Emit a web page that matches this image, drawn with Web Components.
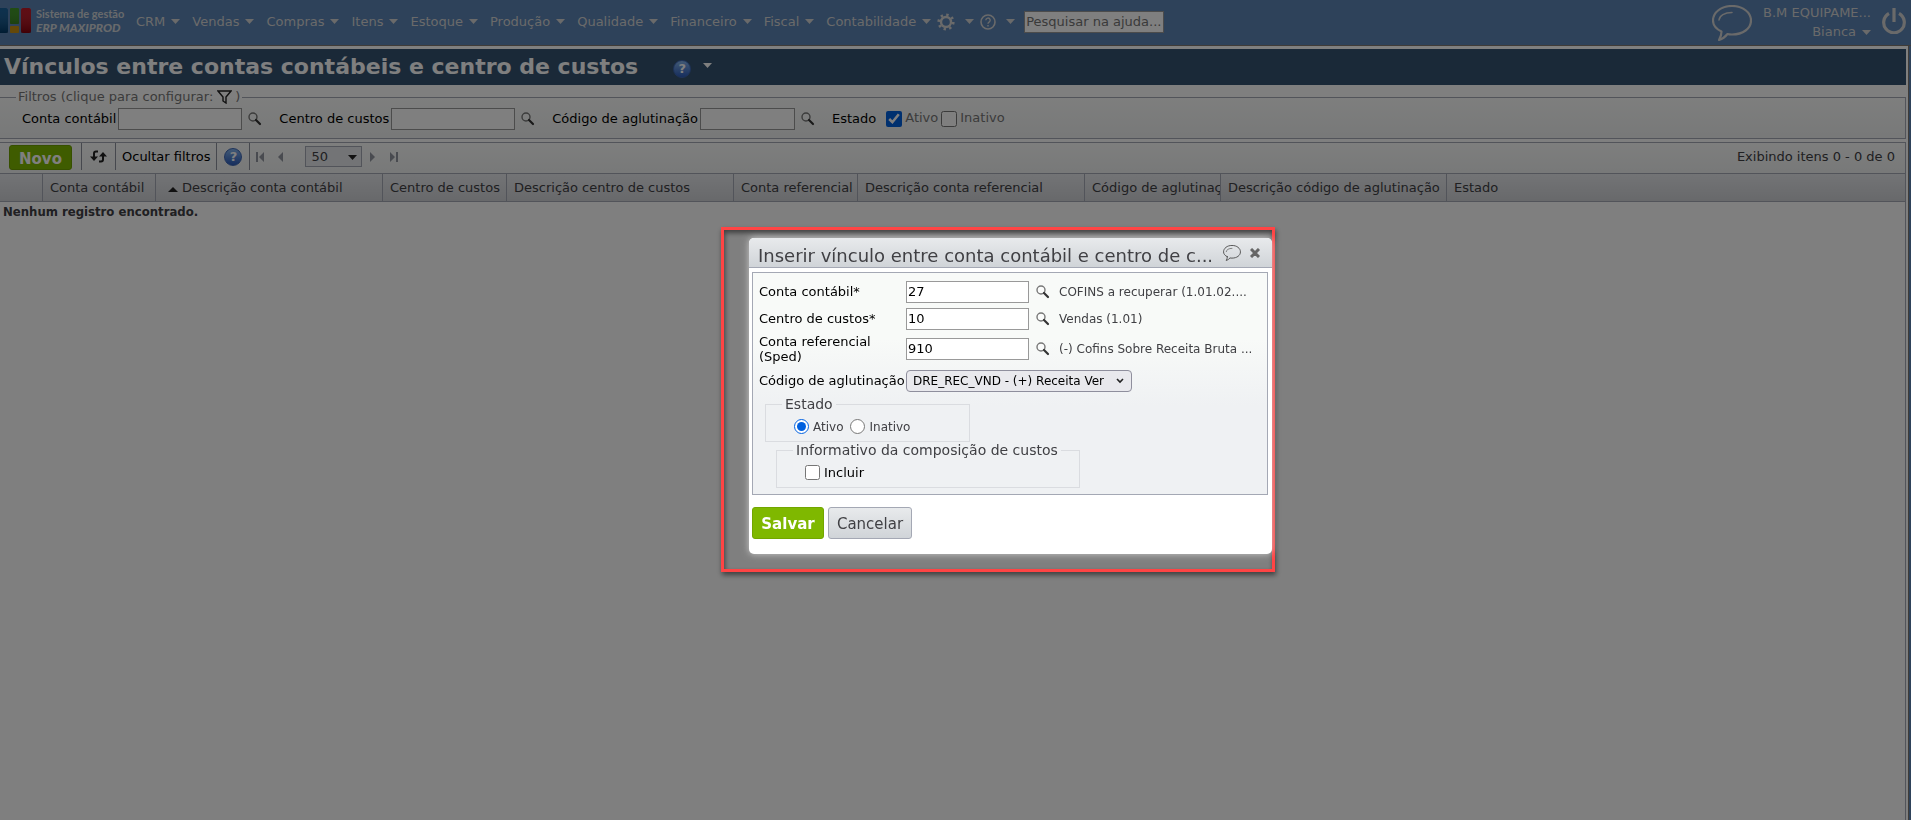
<!DOCTYPE html>
<html lang="pt-BR">
<head>
<meta charset="utf-8">
<title>Vínculos entre contas contábeis e centro de custos</title>
<style>
  html {
    height: 100%;
  }

  body {
    --bar-color: #5c84b4;
    --title-color: #345270;
    --line-color: #a4a8b4;
    --text-color: #404044;
    --green: #7fb800;
    margin: 0;
    min-height: 100%;
    display: flex;
    flex-direction: column;
    background: var(--bar-color);
    font-family: Verdana, "DejaVu Sans", sans-serif;
    font-size: 13px;
    line-height: 16px;
    color: var(--text-color);
  }
</style>
</head>
<body>
  <erp-topbar></erp-topbar>
  <erp-page>
    <page-title slot="title">Vínculos entre contas contábeis e centro de custos</page-title>
    <filter-panel></filter-panel>
    <data-grid></data-grid>
  </erp-page>
  <modal-layer>
    <form-dialog>
      <span slot="title">Inserir vínculo entre conta contábil e centro de c...</span>
      <lookup-row label="Conta contábil*" value="27">COFINS a recuperar (1.01.02....</lookup-row>
      <lookup-row label="Centro de custos*" value="10">Vendas (1.01)</lookup-row>
      <lookup-row label="Conta referencial (Sped)" value="910">(-) Cofins Sobre Receita Bruta ...</lookup-row>
      <binding-options></binding-options>
    </form-dialog>
  </modal-layer>

<script>
  function define(name, html, setup) {
    const template = document.createElement("template");
    template.innerHTML = html;

    window.customElements.define(name, class extends HTMLElement {
      constructor() {
        super();
        const shadowRoot = this.attachShadow({ mode: "open" });
        shadowRoot.appendChild(template.content.cloneNode(true));
        if (setup) setup(this, shadowRoot);
      }
    });
  }

  // icons

  define("icon-search", `
    <style>
      :host { display: block; width: 14px; height: 14px; }
      svg { display: block; }
    </style>
    <svg width="14" height="14" viewBox="0 0 14 14">
      <circle cx="5" cy="5" r="4" fill="#fff" fill-opacity=".4" stroke="#777" stroke-width="1.4"/>
      <path d="M8 8 12 12" stroke="#333" stroke-width="2.2" stroke-linecap="round"/>
    </svg>
  `);

  define("icon-help", `
    <style>
      :host { display: block; width: 18px; height: 18px; }
      div {
        box-sizing: border-box;
        height: 100%;
        border: 1px solid #3d66b4;
        border-radius: 50%;
        background: linear-gradient(#84b4ec, #2c5cbc);
        color: #fff;
        display: flex;
        align-items: center;
        justify-content: center;
        font-size: 13px;
        font-weight: bold;
      }
    </style>
    <div>?</div>
  `);

  define("icon-caret", `
    <style>
      :host { display: block; width: 9px; height: 5px; }
      svg { display: block; }
    </style>
    <svg width="9" height="5" viewBox="0 0 9 5"><path d="M0 0h9L4.500 5z" fill="currentColor"/></svg>
  `);

  define("icon-bubble", `
    <style>
      :host { display: block; width: 40px; height: 36px; }
      svg { display: block; width: 100%; height: 100%; }
    </style>
    <svg viewBox="0 0 40 36" fill="none" stroke="currentColor" stroke-width="2.200" stroke-linecap="round" stroke-linejoin="round">
      <path d="M9.500 26.500C4 24 1 20 1 15.500 1 7.500 9 1 20 1s19 6.500 19 14.500S31 29.500 20 29.500c-1.500 0-3 0-4.500-.5-2 2.500-5 5-8.500 6 1.500-2.500 2.500-5.500 2.500-8.500z"/>
      <path d="M7 15c.5-4.500 5.500-7.500 13-7.500" stroke-width="1.500"/>
    </svg>
  `);

  // top menu bar

  define("menu-item", `
    <style>
      :host { display: block; }
      a {
        display: flex;
        align-items: center;
        gap: 6px;
        color: inherit;
        text-decoration: none;
      }
      :host(.tool) a { gap: 10px; }
    </style>
    <a href="#"><slot></slot><icon-caret></icon-caret></a>
  `);

  define("erp-logo", `
    <style>
      :host {
        display: flex;
        align-items: center;
        gap: 5px;
        width: 136px;
        font-family: Lato, sans-serif;
        font-size: 11px;
        line-height: 14px;
        font-weight: bold;
        color: #d0d4d8;
        white-space: nowrap;
      }
      svg { display: block; }
      em { display: block; font-size: 12px; font-weight: 900; }
    </style>
    <svg width="31" height="25" viewBox="0 0 31 25">
      <defs>
        <linearGradient id="shade" x2="0" y2="1">
          <stop offset="0" stop-color="#fff" stop-opacity=".1"/>
          <stop offset="1" stop-color="#000" stop-opacity=".3"/>
        </linearGradient>
      </defs>
      <path d="M0 0h6q2 0 2 2v21q0 2-2 2H0z" fill="#005090"/>
      <rect x="10" width="9" height="16" rx="1" fill="#2c8c10"/>
      <rect x="10" y="18" width="9" height="7" rx="1" fill="#c89010"/>
      <rect x="21" width="10" height="25" rx="2" fill="#b80010"/>
      <path d="M0 0h8v25H0zM10 0h9v16h-9zM21 0h10v25H21z" fill="url(#shade)"/>
    </svg>
    <div>Sistema de gestão<em>ERP MAXIPROD</em></div>
  `);

  define("erp-topbar", `
    <style>
      :host {
        display: flex;
        align-items: center;
        height: 45px;
        border-bottom: 1px solid #807870;
        color: #d4d4d4;
      }
      erp-logo { margin-bottom: 4px; }
      nav {
        display: flex;
        align-items: center;
        gap: 12px;
        flex: 1;
        margin-bottom: 2px;
      }
      .tool { margin-left: -6px; }
      .tool svg { display: block; }
      input {
        box-sizing: border-box;
        width: 140px;
        height: 22px;
        margin-left: -3px;
        padding: 0 1px;
        border: 1px solid #999;
        background: #fff;
        font: inherit;
      }
      input::placeholder { color: #757575; opacity: 1; }
      .user {
        display: flex;
        align-items: center;
        gap: 11px;
        padding-right: 5px;
      }
      .names {
        display: flex;
        flex-direction: column;
        align-items: flex-end;
        gap: 3px;
      }
      button {
        margin-bottom: 4px;
        border: 0;
        padding: 0;
        background: none;
        color: inherit;
      }
      button svg { display: block; }
    </style>
    <erp-logo></erp-logo>
    <nav>
      <menu-item>CRM</menu-item>
      <menu-item>Vendas</menu-item>
      <menu-item>Compras</menu-item>
      <menu-item>Itens</menu-item>
      <menu-item>Estoque</menu-item>
      <menu-item>Produção</menu-item>
      <menu-item>Qualidade</menu-item>
      <menu-item>Financeiro</menu-item>
      <menu-item>Fiscal</menu-item>
      <menu-item>Contabilidade</menu-item>
      <menu-item class="tool">
        <svg width="18" height="18" viewBox="0 0 18 18" fill="none" stroke="currentColor">
          <circle cx="9" cy="9" r="5" stroke-width="2.400"/>
          <circle cx="9" cy="9" r="7.300" stroke-width="2.600" stroke-dasharray="2.400 3.333"/>
        </svg>
      </menu-item>
      <menu-item class="tool">
        <svg width="16" height="16" viewBox="0 0 16 16" fill="none" stroke="currentColor">
          <circle cx="8" cy="8" r="7" stroke-width="1.600"/>
          <path d="M5.800 6.300a2.200 2.200 0 1 1 3.300 1.900c-.8.500-1.100.8-1.100 1.500M8 11v1.500" stroke-width="1.400"/>
        </svg>
      </menu-item>
      <input type="text" placeholder="Pesquisar na ajuda..." aria-label="Pesquisar na ajuda">
    </nav>
    <div class="user">
      <icon-bubble></icon-bubble>
      <div class="names">
        <span>B.M EQUIPAME...</span>
        <menu-item>Bianca</menu-item>
      </div>
      <button type="button" aria-label="Sair">
        <svg width="24" height="26" viewBox="0 0 24 26" fill="none" stroke="currentColor" stroke-width="3.200">
          <path d="M7 5.500a10.300 10.300 0 1 0 10 0M12 0v14"/>
        </svg>
      </button>
    </div>
  `);

  // page frame

  define("erp-page", `
    <style>
      :host {
        flex: 1;
        display: flex;
        flex-direction: column;
        margin-right: 2px;
        padding: 3px 2px 0 0;
        border-right: 1px solid #807870;
        background: #fff;
      }
    </style>
    <slot name="title"></slot>
    <slot></slot>
  `);

  define("page-title", `
    <style>
      :host {
        display: flex;
        align-items: center;
        height: 36px;
        padding-left: 4px;
        background: var(--title-color);
        color: #fff;
      }
      h1 { margin: 0; font-size: 22px; line-height: 28px; }
      icon-help { margin: 4px 12px 0 35px; }
      icon-caret { margin-bottom: 4px; }
    </style>
    <h1><slot></slot></h1>
    <icon-help></icon-help>
    <icon-caret></icon-caret>
  `);

  // filters

  define("filter-field", `
    <style>
      :host { display: flex; align-items: center; }
      label { color: #000; margin-right: 2px; }
      input {
        box-sizing: border-box;
        width: 124px;
        height: 22px;
        padding: 0 2px;
        border: 1px solid #999;
        background: #fff;
        font: inherit;
      }
      :host([short]) input { width: 95px; }
      icon-search { margin-left: 6px; }
    </style>
    <label for="field"><slot></slot></label>
    <input type="text" id="field">
    <icon-search></icon-search>
  `);

  define("filter-panel", `
    <style>
      :host { display: block; padding-top: 3px; }
      fieldset {
        margin: 0;
        min-width: 0;
        height: 51px;
        box-sizing: border-box;
        padding: 0 0 0 22px;
        border: 1px solid var(--line-color);
        border-left: 0;
        background: linear-gradient(#fcfdfc, #f0f2f2);
      }
      legend {
        display: flex;
        align-items: center;
        height: 18px;
        margin-left: -6px;
        padding: 0 2px;
        color: #777;
      }
      legend svg { margin: 0 3px 0 4px; }
      .fields { display: flex; align-items: center; gap: 17px; height: 26px; }
      .state { display: flex; align-items: center; }
      .state b { font-weight: normal; color: #000; margin-right: 10px; }
      .state label { color: #777; padding: 0 3px 2px 3px; }
      .state input { margin: 0; width: 16px; height: 16px; accent-color: #0060df; }
    </style>
    <fieldset>
      <legend>Filtros (clique para configurar:
        <svg width="15" height="14" viewBox="0 0 15 14" fill="none" stroke="#222" stroke-width="1.400">
          <path d="M1 1h13L9 7v6l-3-2V7z"/>
        </svg>)
      </legend>
      <div class="fields">
        <filter-field>Conta contábil</filter-field>
        <filter-field>Centro de custos</filter-field>
        <filter-field short>Código de aglutinação</filter-field>
        <div class="state">
          <b>Estado</b>
          <input type="checkbox" id="active" checked><label for="active">Ativo</label>
          <input type="checkbox" id="inactive"><label for="inactive">Inativo</label>
        </div>
      </div>
    </fieldset>
  `);

  // grid

  define("grid-toolbar", `
    <style>
      :host {
        display: flex;
        align-items: center;
        height: 30px;
        padding: 0 10px 0 9px;
        background: linear-gradient(#fcfdfc, #f0f2f2);
      }
      button {
        border: 0;
        padding: 0;
        background: none;
        font: inherit;
        color: #000;
        display: flex;
        align-items: center;
        justify-content: center;
      }
      .new {
        box-sizing: border-box;
        width: 63px;
        height: 25px;
        margin: 0 9px 1px 0;
        padding-top: 2px;
        border: 1px solid #6fa000;
        border-radius: 3px;
        background: var(--green);
        color: #fff;
        font-size: 15px;
        font-weight: bold;
      }
      .cell {
        box-sizing: border-box;
        height: 27px;
        border-left: 1px solid #8c909c;
        padding: 0 6px;
        align-self: flex-start;
      }
      .refresh { width: 34px; padding: 0; }
      .help { display: flex; align-items: center; padding: 0 7px; }
      .pager { display: flex; align-items: center; flex: 1; }
      .pager button { color: #9296a0; }
      .pager svg { display: block; }
      .prev { margin: 0 20px 0 13px; }
      .next { margin: 0 14px 0 8px; }
      select {
        appearance: none;
        box-sizing: border-box;
        width: 57px;
        height: 21px;
        padding: 0 5px;
        border: 1px solid var(--line-color);
        border-radius: 0;
        background: #e6e8ec;
        font: inherit;
        color: inherit;
      }
      .size { display: grid; align-items: center; }
      .size > * { grid-area: 1 / 1; }
      .size icon-caret { justify-self: end; margin: 2px 5px 0 0; color: #222; }
      .count { margin-bottom: 2px; }
    </style>
    <button type="button" class="new">Novo</button>
    <button type="button" class="cell refresh" aria-label="Atualizar">
      <svg width="17" height="13" viewBox="0 0 17 13" fill="none" stroke="#222" stroke-width="2">
        <path d="M8 1.500H6q-2 0-2 2V8M9 11.500h2q2 0 2-2V5"/>
        <path d="M0 6.500h8L4 11zM9 6.500h8L13 2z" fill="#222" stroke="none"/>
      </svg>
    </button>
    <button type="button" class="cell">Ocultar filtros</button>
    <div class="cell help"><icon-help></icon-help></div>
    <div class="cell pager">
      <button type="button" aria-label="Primeira"><svg width="8" height="10" fill="currentColor"><path d="M0 0h2v10H0zM8 0v10L3 5z"/></svg></button>
      <button type="button" class="prev" aria-label="Anterior"><svg width="8" height="10" fill="currentColor"><path d="M6 0v10L1 5z"/></svg></button>
      <span class="size">
        <select aria-label="Itens por página"><option>50</option></select>
        <icon-caret></icon-caret>
      </span>
      <button type="button" class="next" aria-label="Próxima"><svg width="6" height="10" fill="currentColor"><path d="M0 0v10l5-5z"/></svg></button>
      <button type="button" aria-label="Última"><svg width="8" height="10" fill="currentColor"><path d="M6 0h2v10H6zM0 0v10l5-5z"/></svg></button>
    </div>
    <span class="count">Exibindo itens 0 - 0 de 0</span>
  `);

  define("data-grid", `
    <style>
      :host {
        flex: 1;
        display: block;
        margin-top: 3px;
        border: solid var(--line-color);
        border-width: 1px 1px 0 0;
      }
      table {
        width: 100%;
        table-layout: fixed;
        border-collapse: separate;
        border-spacing: 0;
      }
      th {
        box-sizing: border-box;
        height: 29px;
        padding: 0 0 0 7px;
        border: solid var(--line-color);
        border-width: 1px 0 1px 1px;
        background: linear-gradient(#e6e8ec, #d0d2d6);
        font-weight: normal;
        text-align: left;
        white-space: nowrap;
        overflow: hidden;
      }
      th:first-child { border-left: 0; }
      th.sorted { padding-left: 12px; }
      th svg { margin-right: 4px; vertical-align: 0; }
      td {
        padding: 2px 3px;
        font-family: Tahoma, "DejaVu Sans Condensed", "DejaVu Sans", sans-serif;
        font-weight: bold;
      }
    </style>
    <grid-toolbar></grid-toolbar>
    <table>
      <colgroup>
        <col style="width: 42px"><col style="width: 113px"><col style="width: 227px">
        <col style="width: 124px"><col style="width: 227px"><col style="width: 124px">
        <col style="width: 227px"><col style="width: 136px"><col style="width: 226px"><col>
      </colgroup>
      <thead>
        <tr>
          <th></th>
          <th>Conta contábil</th>
          <th class="sorted"><svg width="10" height="5"><path d="M0 5h10L5 0z" fill="#222"/></svg>Descrição conta contábil</th>
          <th>Centro de custos</th>
          <th>Descrição centro de custos</th>
          <th>Conta referencial</th>
          <th>Descrição conta referencial</th>
          <th>Código de aglutinação</th>
          <th>Descrição código de aglutinação</th>
          <th>Estado</th>
        </tr>
      </thead>
      <tbody>
        <tr><td colspan="10">Nenhum registro encontrado.</td></tr>
      </tbody>
    </table>
  `);

  // dialog

  // the frame lies over the dimmed page and marks the dialog
  define("modal-layer", `
    <style>
      :host {
        position: fixed;
        inset: 0;
        background: rgba(0, 0, 0, .5);
      }
      .frame {
        position: absolute;
        left: 721px;
        top: 227px;
        box-sizing: border-box;
        width: 554px;
        padding: 8px 0 15px 25px;
        border: 3px solid #ff4444;
        box-shadow: 1px 3px 5px rgba(0, 0, 0, .5), inset 1px 3px 5px rgba(0, 0, 0, .5);
      }
    </style>
    <div class="frame"><slot></slot></div>
  `);

  define("form-dialog", `
    <style>
      :host {
        display: block;
        border-radius: 5px;
        background: #fff;
        box-shadow: 0 0 7px #ccc;
      }
      header {
        display: flex;
        align-items: center;
        box-sizing: border-box;
        height: 30px;
        padding: 0 12px 0 9px;
        border-bottom: 1px solid var(--line-color);
        border-radius: 5px 5px 0 0;
        background: linear-gradient(#e8eaec, #d0d4d8);
      }
      h2 {
        flex: 1;
        margin: 0;
        padding-top: 6px;
        font-size: 18px;
        line-height: 24px;
        font-weight: normal;
        white-space: nowrap;
      }
      header icon-bubble { width: 18px; height: 16px; margin-right: 9px; color: #555; }
      header button { border: 0; padding: 0; background: none; }
      header svg { display: block; }
      form { padding: 4px 4px 15px 3px; }
      .body {
        display: flex;
        flex-direction: column;
        box-sizing: border-box;
        height: 223px;
        padding: 5px 6px 0;
        border: 1px solid var(--line-color);
        background: linear-gradient(#f8faf8, #f8faf8 30%, #eff1f3 60%);
      }
      .actions { display: flex; gap: 4px; padding-top: 12px; }
      .actions button {
        box-sizing: border-box;
        height: 32px;
        width: 84px;
        padding: 2px 0 0;
        border: 1px solid var(--line-color);
        border-radius: 3px;
        background: linear-gradient(#e8eaec, #d0d4d8);
        font: inherit;
        font-size: 15px;
        color: inherit;
      }
      .actions .save {
        width: 72px;
        border-color: #72a600;
        background: var(--green);
        color: #fff;
        font-weight: bold;
      }
    </style>
    <header>
      <h2><slot name="title"></slot></h2>
      <icon-bubble></icon-bubble>
      <button type="button" aria-label="Fechar">
        <svg width="10" height="10" viewBox="0 0 10 10" stroke="#666" stroke-width="3"><path d="M1 1l8 8M9 1l-8 8"/></svg>
      </button>
    </header>
    <form>
      <div class="body"><slot></slot></div>
      <div class="actions">
        <button type="button" class="save">Salvar</button>
        <button type="button">Cancelar</button>
      </div>
    </form>
  `);

  define("lookup-row", `
    <style>
      :host {
        display: grid;
        grid-template-columns: 147px 123px auto 1fr;
        align-items: center;
        min-height: 27px;
      }
      label { color: #000; line-height: 15px; padding: 2px 20px 2px 0; }
      input {
        box-sizing: border-box;
        height: 22px;
        min-width: 0;
        padding: 0 1px 1px;
        border: 1px solid #999;
        background: #fff;
        font: inherit;
        color: #000;
      }
      icon-search { margin: 0 9px 0 7px; }
      span { white-space: nowrap; font-size: 12px; }
    </style>
    <label for="field"></label>
    <input type="text" id="field">
    <icon-search></icon-search>
    <span><slot></slot></span>
  `, (host, root) => {
    root.querySelector("label").textContent = host.getAttribute("label");
    root.querySelector("input").value = host.getAttribute("value");
  });

  define("binding-options", `
    <style>
      :host { display: block; }
      .row { display: grid; grid-template-columns: 147px 226px; align-items: center; height: 30px; }
      .row label { color: #000; white-space: nowrap; }
      select {
        appearance: none;
        height: 22px;
        padding: 0 22px 0 6px;
        border: 1px solid #8f8f9d;
        border-radius: 4px;
        background: #e9e9ed;
        font: inherit;
        font-size: 12px;
        color: #000;
      }
      .pick { display: grid; align-items: center; }
      .pick > * { grid-area: 1 / 1; min-width: 0; }
      .pick svg { justify-self: end; margin-right: 8px; }
      fieldset {
        display: flex;
        align-items: center;
        box-sizing: border-box;
        min-width: 0;
        margin: 0;
        padding: 0 0 0 28px;
        border: 1px solid #dadce0;
      }
      legend { padding: 0 3px; margin-left: -12px; font-size: 14px; }
      .state { width: 205px; height: 46px; margin-left: 6px; }
      .cost { width: 304px; height: 46px; margin-left: 17px; }
      input { width: 15px; height: 15px; margin: 0 4px 0 0; accent-color: #0060df; }
      .state label { font-size: 12px; margin-right: 7px; }
      .cost label { color: #000; }
    </style>
    <div class="row">
      <label for="code">Código de aglutinação</label>
      <span class="pick">
        <select id="code"><option>DRE_REC_VND - (+) Receita Ver</option></select>
        <svg width="8" height="6" viewBox="0 0 8 6" fill="none" stroke="#222" stroke-width="1.600"><path d="M1 1l3 3 3-3"/></svg>
      </span>
    </div>
    <fieldset class="state">
      <legend>Estado</legend>
      <input type="radio" name="state" id="on" checked><label for="on">Ativo</label>
      <input type="radio" name="state" id="off"><label for="off">Inativo</label>
    </fieldset>
    <fieldset class="cost">
      <legend>Informativo da composição de custos</legend>
      <input type="checkbox" id="include"><label for="include">Incluir</label>
    </fieldset>
  `);
</script>
</body>
</html>
